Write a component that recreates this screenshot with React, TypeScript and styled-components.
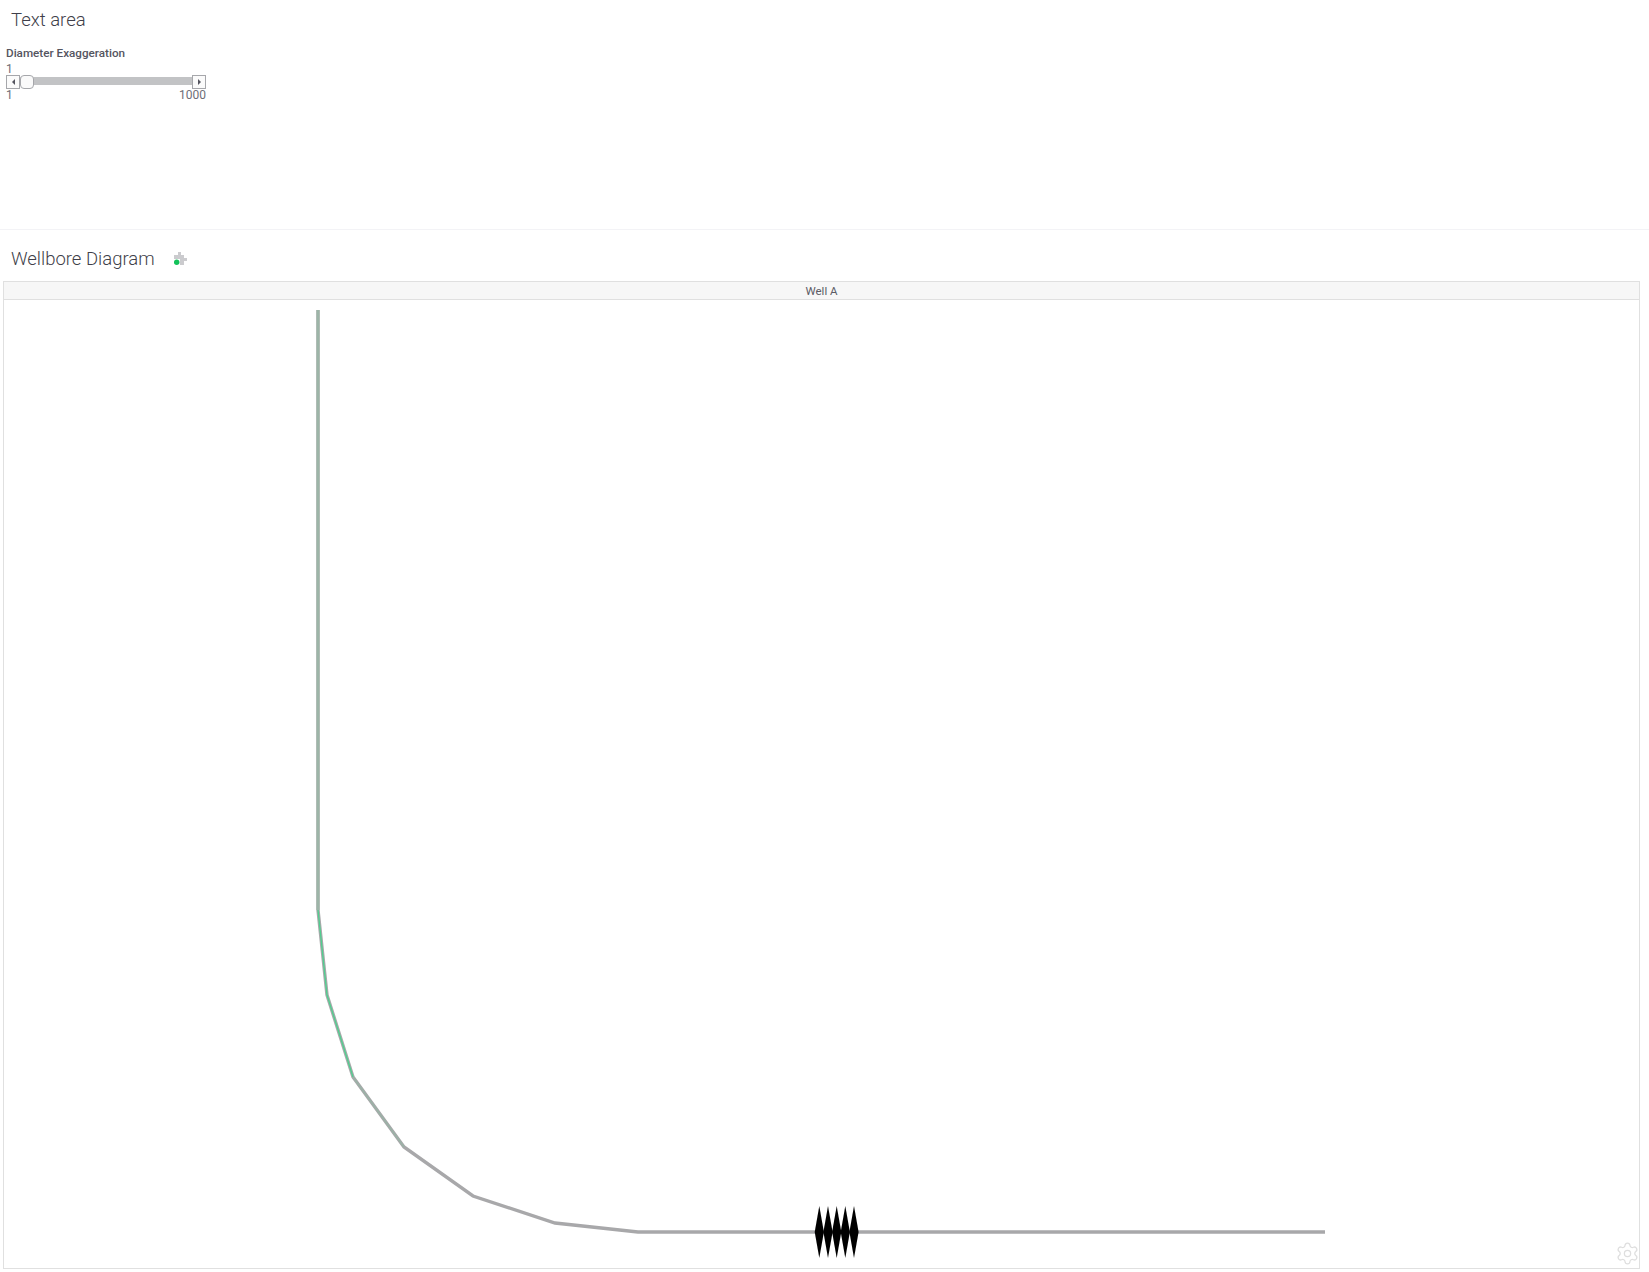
import { createGlobalStyle } from 'styled-components'
import styled from 'styled-components'
import { Settings } from 'lucide-react'

const GlobalStyle = createGlobalStyle`
  html, body {
    margin: 0;
    padding: 0;
    background: #fff;
    font-family: Roboto, 'Liberation Sans', sans-serif;
    color: #45454f;
  }
`

const Page = styled.div`
  width: 1649px;
  height: 1272px;
  display: flex;
  flex-direction: column;
  overflow: hidden;
`

const TextPanel = styled.section`
  height: 230px;
  flex: none;
  box-sizing: border-box;
  border-bottom: 1px solid #f3f3f6;
  padding: 9px 6px 0;
`

const PanelTitle = styled.h2`
  margin: 0;
  padding-left: 5px;
  font-size: 18.5px;
  line-height: 22px;
  font-weight: 300;
  color: #3f3f4a;
`

const SliderLabel = styled.div`
  margin-top: 15px;
  font-size: 11.7px;
  line-height: 14px;
  font-weight: 500;
  color: #55555f;
`

const SliderValue = styled.div`
  margin-top: 4px;
  font-size: 12px;
  line-height: 10px;
  color: #6e6e77;
`

const SliderRow = styled.div`
  position: relative;
  width: 200px;
  height: 14px;
  margin-top: 1px;
  display: flex;
  align-items: flex-start;
`

const StepButton = styled.div`
  flex: none;
  width: 14px;
  height: 14px;
  box-sizing: border-box;
  background: #fbfbfb;
  border: 1px solid #a6a7ab;
  display: flex;
  align-items: center;
  justify-content: center;
`

const Track = styled.div`
  flex: 1;
  height: 8px;
  margin-top: 2px;
  background: #c2c3c5;
`

const Handle = styled.div`
  position: absolute;
  left: 14px;
  top: 0;
  width: 14px;
  height: 14px;
  box-sizing: border-box;
  background: #fafafa;
  border: 1px solid #a6a7ab;
  border-radius: 4px;
`

const Arrow = styled.span<{ $dir: 'left' | 'right' }>`
  width: 0;
  height: 0;
  border-top: 3px solid transparent;
  border-bottom: 3px solid transparent;
  ${(p) => (p.$dir === 'left' ? 'border-right: 3px solid #55555f;' : 'border-left: 3px solid #55555f;')}
`

const SliderScale = styled.div`
  width: 200px;
  display: flex;
  justify-content: space-between;
  font-size: 12px;
  line-height: 10px;
  margin-top: 1px;
  color: #6e6e77;
`

const DiagramPanel = styled.section`
  flex: 1;
  display: flex;
  flex-direction: column;
  padding: 0 9px 3px 3px;
  min-height: 0;
`

const DiagramHeader = styled.div`
  height: 51px;
  flex: none;
  box-sizing: border-box;
  padding: 18px 0 0 8px;
  display: flex;
  align-items: flex-start;
  gap: 18px;
`

const DiagramTitle = styled(PanelTitle)`
  padding-left: 0;
`

const PluginIcon = styled.svg`
  display: block;
  margin-top: 3px;
`

const Chart = styled.div`
  position: relative;
  flex: 1;
  min-height: 0;
  display: flex;
  flex-direction: column;
  border: 1px solid #e0e0e0;
`

const ChartHeader = styled.div`
  height: 17px;
  flex: none;
  background: #f7f7f7;
  border-bottom: 1px solid #e0e0e0;
  font-size: 11.5px;
  line-height: 18px;
  text-align: center;
  color: #5c5c66;
`

const Plot = styled.svg`
  display: block;
  flex: 1;
  min-height: 0;
  width: 100%;
`

const GearCorner = styled.div`
  position: absolute;
  right: -1px;
  bottom: 2px;
  width: 25px;
  height: 25px;
  color: #dedede;
`

// plot origin in page coords is (4, 300)
const wellPath = '314,10 314,610 323,695 349,777 400,847 469,896 551,923 634,932 1321,932'
const verticalTint = '314,10 314,610'
const curveGreen = '314,610 323,695 349,777'
const curveFade = '349,777 400,847'
const perfCenters = [815.3, 824, 832.7, 841.3, 850]

function Diamond({ cx }: { cx: number }) {
  return <polygon points={`${cx - 4.6},932 ${cx},906 ${cx + 4.6},932 ${cx},958`} fill="#000" />
}

export default function App() {
  return (
    <Page>
      <GlobalStyle />
      <TextPanel>
        <PanelTitle>Text area</PanelTitle>
        <SliderLabel>Diameter Exaggeration</SliderLabel>
        <SliderValue>1</SliderValue>
        <SliderRow>
          <StepButton>
            <Arrow $dir="left" />
          </StepButton>
          <Track />
          <Handle />
          <StepButton>
            <Arrow $dir="right" />
          </StepButton>
        </SliderRow>
        <SliderScale>
          <span>1</span>
          <span>1000</span>
        </SliderScale>
      </TextPanel>
      <DiagramPanel>
        <DiagramHeader>
          <DiagramTitle>Wellbore Diagram</DiagramTitle>
          <PluginIcon width="18" height="16" viewBox="0 0 18 16">
            <path d="M5 1h3v3h3v3h3v3h-3v4H7V8H1V4h4z" fill="#cbcbce" />
            <circle cx="3.7" cy="11.3" r="2.7" fill="#14c25a" />
          </PluginIcon>
        </DiagramHeader>
        <Chart>
          <ChartHeader>Well A</ChartHeader>
          <Plot viewBox="0 0 1635 967" preserveAspectRatio="xMinYMin meet">
            <polyline points={wellPath} fill="none" stroke="#a8a8aa" strokeWidth="3.4" />
            <polyline points={verticalTint} fill="none" stroke="#9db5a8" strokeWidth="3" />
            <polyline points={curveGreen} fill="none" stroke="#4fd08f" strokeWidth="1.3" />
            <polyline points={curveFade} fill="none" stroke="#9ab3a6" strokeWidth="1.4" />
            {perfCenters.map((cx) => (
              <Diamond key={cx} cx={cx} />
            ))}
          </Plot>
          <GearCorner>
            <Settings size={25} strokeWidth={1.2} />
          </GearCorner>
        </Chart>
      </DiagramPanel>
    </Page>
  )
}
